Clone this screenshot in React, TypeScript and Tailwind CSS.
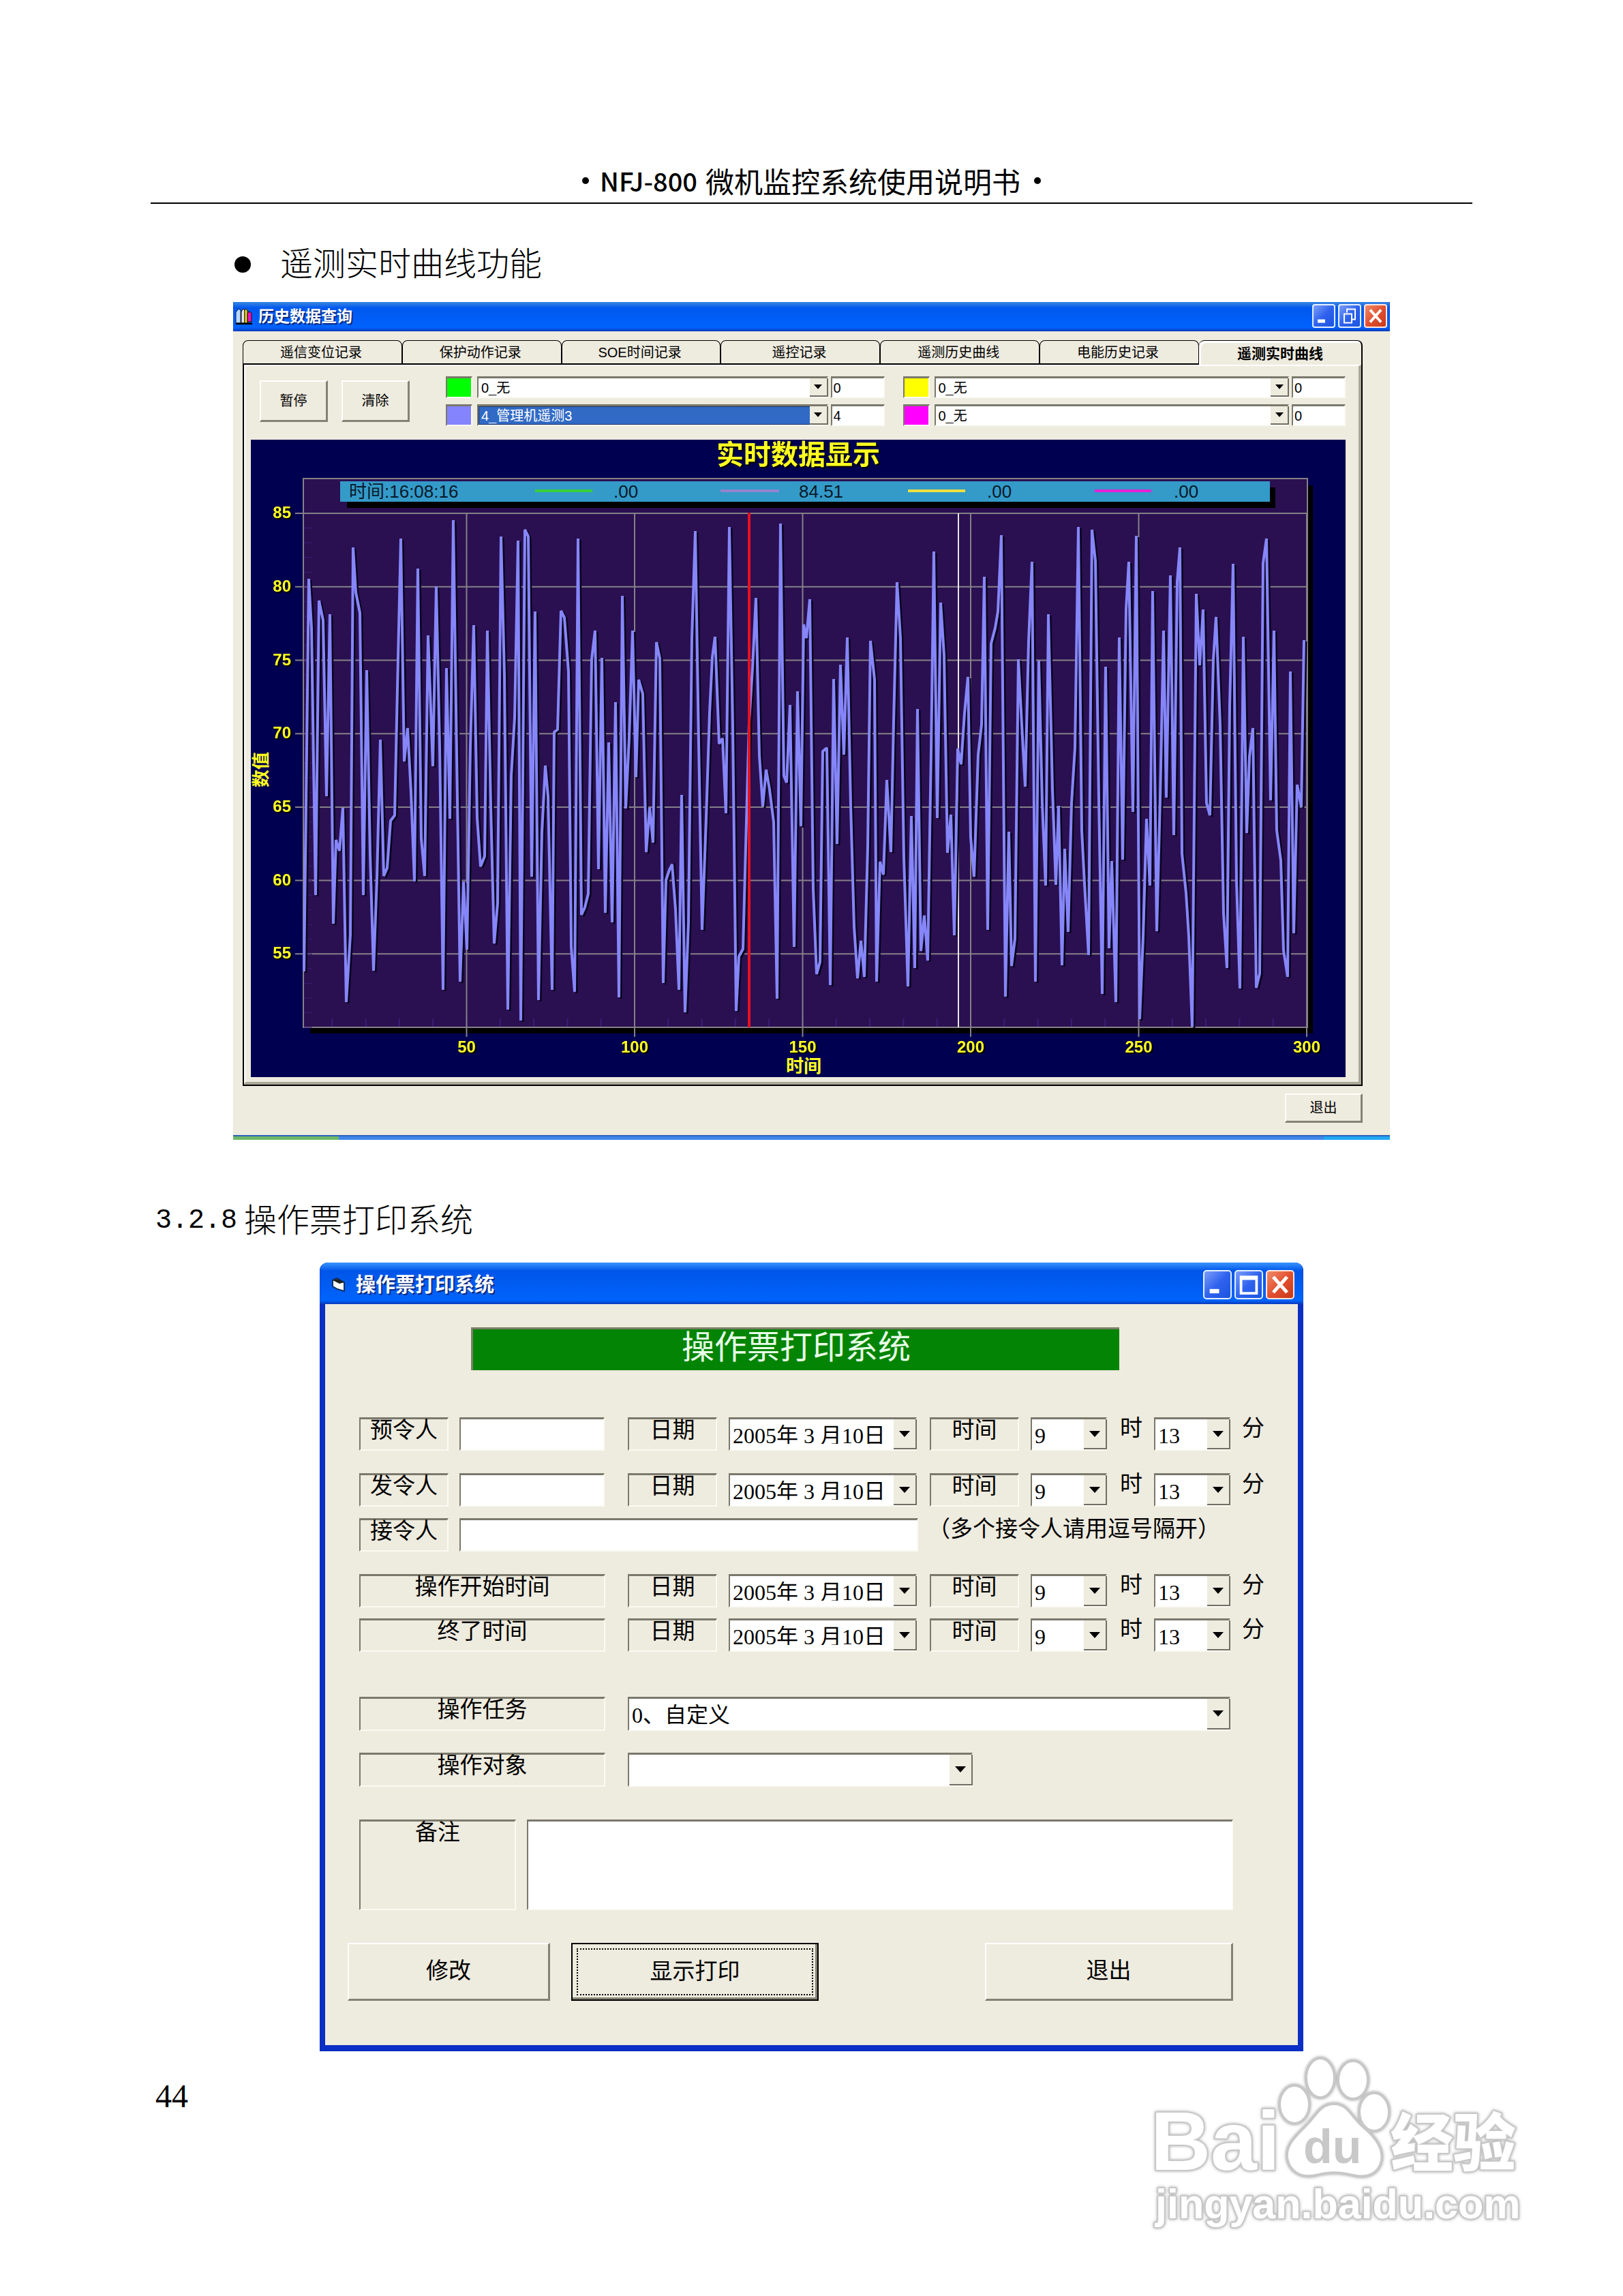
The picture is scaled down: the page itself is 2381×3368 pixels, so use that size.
import type { ReactNode } from "react";

const songFont = "font-['Liberation_Serif','Noto_Sans_CJK_SC',sans-serif]";
const heiFont = "font-['Noto_Sans_CJK_SC',sans-serif]";
const uiFont = "font-['Liberation_Sans','Noto_Sans_CJK_SC',sans-serif]";

const sunken = "border-t-[3px] border-l-2 border-r-2 border-b-2 border-t-[#7b786c] border-l-[#7b786c] border-r-[#fbfaf3] border-b-[#fbfaf3]";
const raised = "border-t-2 border-l-2 border-r-[3px] border-b-[3px] border-t-white border-l-white border-r-[#858275] border-b-[#858275]";

const tabs = ["遥信变位记录", "保护动作记录", "SOE时间记录", "遥控记录", "遥测历史曲线", "电能历史记录"];

const blocks = [
  {
    dx: -28, kx: 2.8, ky: 1.633,
    pts: "298,1298 317,357 328,475 345,1116 359,410 374,458 388,878 402,442 416,1184 428,983 443,1010 457,907 471,1372 486,1210 498,282 510,390 527,440 540,1116 554,576 567,1017 582,1297 596,1075 609,743 623,1070 637,1050 651,937 668,925 679,620 693,261 707,795 721,715 735,870 749,1082 764,333 778,980 793,1070 806,493 827,806 841,375 855,760 869,1342 883,571 897,932 911,217 925,780 939,1323 953,1082 967,1246 981,760 995,468 1008,930 1023,1047 1038,1022 1051,481 1065,905 1079,1231 1093,1135 1106,257 1120,590 1134,1389 1148,830 1162,690 1175,266 1188,1416 1203,240 1218,256 1231,1072 1245,436 1259,1367 1273,965 1287,805 1300,878 1315,1342 1324,725 1338,718 1351,435 1367,450 1382,580 1393,1240 1408,1347 1421,261 1435,1162 1450,1145 1465,1112 1478,550 1491,481 1506,1054",
  },
  {
    dx: 512, kx: 2.8, ky: 1.633,
    pts: "8,547 22,1158 36,750 50,1180 64,654 78,1360 92,398 106,908 119,740 133,481 147,833 160,600 177,634 190,1012 204,907 217,990 233,510 247,548 260,1326 272,1080 285,1055 298,1042 310,1150 326,1342 337,875 351,1396 365,1180 379,500 392,244 407,750 421,1198 436,930 450,680 462,545 474,497 489,753 503,740 517,919 531,233 545,715 560,1393 572,1262 587,1245 600,1000 613,700 628,570 642,403 656,780 670,903 684,815 698,862 714,940 727,1363 741,225 755,830 768,846 782,659 797,1240 811,627 825,950 838,467 848,500 861,406 875,1100 889,1304 904,1275 915,770 932,763 946,1331 960,597 973,993 988,563 1001,779 1015,498 1030,900 1044,1190 1057,1314 1071,1225 1085,1312 1100,1000 1112,506 1127,600 1138,1323 1152,1035 1166,1066 1180,839 1195,1012 1208,700 1222,365 1236,500 1250,1025 1265,1334 1279,926 1293,1290 1306,670 1320,1250 1334,1165 1348,1272 1362,770 1371,293 1385,930 1399,414 1413,540 1427,1014 1441,922 1455,1212 1469,765 1483,802 1497,680 1511,592",
  },
  {
    dx: 1052, kx: 2.45, ky: 1.479,
    pts: "11,885 23,970 36,705 48,640 60,320 72,1085 84,465 97,430 109,395 121,229 134,1230 146,872 158,1164 170,1105 182,498 194,640 207,775 218,460 230,287 242,1198 255,502 266,810 279,990 290,401 303,780 315,988 325,816 337,1162 349,910 361,1090 373,810 385,690 396,212 408,870 420,985 433,1141 445,218 457,285 470,800 482,1224 494,515 506,1125 518,936 531,1243 543,451 556,933 568,390 579,287 592,830 604,231 617,1280 630,1100 641,844 653,990 665,350 678,1088 690,800 702,437 714,799 727,317 739,880 751,330 763,256 770,920 783,1005 795,1100 807,1295 820,357 832,512 845,391 857,810 869,837 881,500 893,406 906,640 918,1050 930,1168 942,600 952,291 965,980 977,1213 989,450 1001,876 1013,710 1025,648 1037,1211 1049,1180 1061,290 1074,236 1087,804 1099,437 1110,870 1124,935 1135,1130 1148,1187 1160,525 1172,1093 1184,770 1197,820 1207,457",
  },
];

const curve = blocks
  .flatMap((b) =>
    b.pts.split(" ").map((p) => {
      const [x, y] = p.split(",").map(Number);
      return `${Math.round(x / b.kx + b.dx)},${Math.round(y / b.ky - 15)}`;
    })
  )
  .join(" ");

const px = (v: number) => 70 + v * 4.93;
const py = (v: number) => 862 - (v - 50) * 21.54;

function Chart() {
  return (
    <svg viewBox="0 0 1606 935" className={`block w-full bg-[#000050] ${uiFont}`} role="img" aria-label="实时数据显示">
      <text x="803" y="36" textAnchor="middle" fontSize="40" fontWeight="700" fill="#ffff20" className="drop-shadow-[2px_2px_0_#000]">
        实时数据显示
      </text>
      <rect x="87" y="67" width="1471" height="804" fill="#000" />
      <rect x="77" y="57" width="1473" height="805" fill="#2a1050" stroke="#858088" strokeWidth="2" />
      {[85, 80, 75, 70, 65, 60, 55].map((v) => (
        <g key={v}>
          <line x1="65" x2="1550" y1={py(v)} y2={py(v)} stroke="#858088" strokeWidth="2" />
          <text x="59" y={py(v) + 7} textAnchor="end" fontSize="24" fontWeight="700" fill="#ffff20" className="drop-shadow-[2px_2px_0_#000]">
            {v}
          </text>
        </g>
      ))}
      {Array.from({ length: 35 }, (_, i) => (
        <line key={i} x1="78" x2="90" y1={py(50 + i)} y2={py(50 + i)} stroke="#3c1c78" />
      ))}
      {Array.from({ length: 29 }, (_, i) => (
        <line key={i} x1={px(10 + i * 10)} x2={px(10 + i * 10)} y1="849" y2="861" stroke="#3c1c78" strokeWidth="2" />
      ))}
      {[50, 100, 150, 200, 250, 300].map((v) => (
        <g key={v}>
          <line x1={px(v)} x2={px(v)} y1="108" y2="876" stroke="#858088" strokeWidth="2" />
          <text x={px(v)} y="899" textAnchor="middle" fontSize="24" fontWeight="700" fill="#ffff20" className="drop-shadow-[2px_2px_0_#000]">
            {v}
          </text>
        </g>
      ))}
      <line x1="1038" x2="1038" y1="108" y2="862" stroke="#e8e8e8" strokeWidth="2" />
      <polyline points={curve} fill="none" stroke="#08041c" strokeWidth="3" transform="translate(3 2)" />
      <polyline points={curve} fill="none" stroke="#8686fa" strokeWidth="4" strokeLinejoin="bevel" />
      <rect x="729" y="107" width="4" height="755" fill="#e81020" />

      <rect x="141" y="70" width="1362" height="30" fill="#000" />
      <rect x="131" y="61" width="1364" height="30" fill="#349ac8" />
      <g fontSize="26" fill="#081828">
        <text x="144" y="85">时间:16:08:16</text>
        <text x="532" y="85">.00</text>
        <text x="804" y="85">84.51</text>
        <text x="1080" y="85">.00</text>
        <text x="1354" y="85">.00</text>
      </g>
      <g strokeWidth="4">
        <line x1="417" x2="501" y1="75" y2="75" stroke="#38d038" />
        <line x1="689" x2="775" y1="75" y2="75" stroke="#9484d0" />
        <line x1="964" x2="1048" y1="75" y2="75" stroke="#f0e040" />
        <line x1="1238" x2="1321" y1="75" y2="75" stroke="#e820d8" />
      </g>
      <text x="811" y="928" textAnchor="middle" fontSize="26" fontWeight="700" fill="#ffff20">时间</text>
      <text transform="translate(24 484) rotate(-90)" textAnchor="middle" fontSize="26" fontWeight="700" fill="#ffff20">数值</text>
    </svg>
  );
}

function Caption({ small, middle }: { small?: boolean; middle: ReactNode }) {
  const box = small ? "h-[35px] w-[34px] rounded-[4px]" : "h-[43px] w-[42px] rounded-[5px]";
  const blue = "bg-linear-to-br from-[#7d9cf8] via-[#2f62ee] to-[#1a55e0]";
  return (
    <div className="flex gap-1">
      <button aria-label="最小化" className={`border-2 border-[#e4f0ff] ${box} ${blue}`}>
        <svg viewBox="0 0 30 30" className="size-full"><rect x="6" y="20" width="11" height="5" fill="#fff" /></svg>
      </button>
      <button aria-label="最大化" className={`border-2 border-[#e4f0ff] ${box} ${blue}`}>
        <svg viewBox="0 0 30 30" className="size-full" fill="none" stroke="#fff" strokeWidth="2">{middle}</svg>
      </button>
      <button aria-label="关闭" className={`border-2 border-[#ffe8e0] bg-linear-to-br from-[#f08a68] via-[#e25030] to-[#c83818] ${box}`}>
        <svg viewBox="0 0 30 30" className="size-full"><path d="M7 6 L23 24 M23 6 L7 24" stroke="#fff" strokeWidth="4" /></svg>
      </button>
    </div>
  );
}

function Select({ label, value, className, small, selected }: { label: string; value: string; className: string; small?: boolean; selected?: boolean }) {
  return (
    <div className={`relative bg-white ${sunken} ${className}`}>
      <select
        aria-label={label}
        className={`block h-full w-full appearance-none pl-1 ${small ? "leading-[22px]" : "pb-2"} ${selected ? "bg-[#316ac5] text-white outline-1 -outline-offset-1 outline-dotted outline-black" : ""}`}
      >
        <option>{value}</option>
      </select>
      <span className={`pointer-events-none absolute inset-y-0 -right-[2px] flex items-center justify-center border-r-2 border-b-2 border-[#716f64] bg-[#eeebdf] ${small ? "w-[27px]" : "w-[34px]"}`}>
        <svg viewBox="0 0 16 9" className={small ? "w-3" : "w-4"}><path d="M0 0 H16 L8 9 Z" /></svg>
      </span>
    </div>
  );
}

function Channel({ color, value, num, selected }: { color: string; value: string; num: string; selected?: boolean }) {
  return (
    <div className="flex h-8">
      <span className={`mr-[7px] w-[39px] ${sunken} ${color}`} />
      <Select small label="通道" value={value} selected={selected} className="mr-1 min-w-0 flex-1" />
      <input aria-label="通道号" defaultValue={num} className={`w-[79px] bg-white pl-[2px] ${sunken}`} />
    </div>
  );
}

function HistoryWindow() {
  return (
    <section className={`bg-[#eeebdf] text-[20px] ${uiFont}`}>
      <div className="flex h-[43px] items-center bg-linear-to-b from-[#3a86e0] via-[#0058ee] via-20% to-[#0064ff] pr-1 pb-[2px] pl-[3px] shadow-[inset_0_-3px_3px_#0a3fc0]">
        <svg viewBox="0 0 26 24" className="h-6 w-[26px]">
          <path d="M1 22 V6 L5 1 L8 3 V22 Z" fill="#b8d8ff" stroke="#102040" />
          <path d="M9 22 V5 L12 1 L14 3 V22 Z" fill="#e8e8e8" stroke="#201000" />
          <path d="M14 22 V3 L16 1 L18 4 V22 Z" fill="#e8e020" stroke="#201000" />
          <path d="M18 20 V8 L20 5 L24 7 V20 Z" fill="#f010c0" stroke="#201000" />
          <path d="M1 23 H25" stroke="#000" strokeWidth="3" />
        </svg>
        <h3 className="ml-2 flex-1 text-[23px] leading-[30px] font-bold text-white [text-shadow:2px_2px_0_#0a2a80]">历史数据查询</h3>
        <Caption small middle={<path d="M11 10 V5 H23 V20 H19 M7 12 H18 V25 H7 Z" />} />
      </div>
      <div className="pt-[13px] pr-10 pl-[14px]">
        <div className="flex h-9">
          {tabs.map((t) => (
            <button key={t} className="flex-1 rounded-t-[8px] border-x border-t border-b-2 border-black pr-1">
              {t}
            </button>
          ))}
          <button className="w-[240px] rounded-t-[8px] border-t border-r-2 border-black pt-[2px] text-[21px] font-bold shadow-[inset_3px_3px_0_#fff]">遥测实时曲线</button>
        </div>
        <div className="border-r-2 border-b-2 border-l-2 border-black">
          <div className="border-t-2 border-r-4 border-b-4 border-l-2 border-t-white border-r-[#aca899] border-b-[#aca899] border-l-white pt-[15px] pr-[19px] pb-[7px] pl-2">
            <div className="mb-5 flex items-center pl-[13px]">
              <button className={`mr-5 h-[61px] w-[100px] ${raised}`}>暂停</button>
              <button className={`mr-[53px] h-[61px] w-[100px] ${raised}`}>清除</button>
              <div className="grid flex-1 grid-cols-[644fr_650fr] gap-x-[27px] gap-y-[9px]">
                <Channel color="bg-[#00ff00]" value="0_无" num="0" />
                <Channel color="bg-[#ffff00]" value="0_无" num="0" />
                <Channel color="bg-[#8484ff]" value="4_管理机遥测3" num="4" selected />
                <Channel color="bg-[#ff00ff]" value="0_无" num="0" />
              </div>
            </div>
            <Chart />
          </div>
        </div>
        <div className="mt-[11px] mb-[18px] flex justify-end">
          <button className={`h-[43px] w-[114px] ${raised}`}>退出</button>
        </div>
      </div>
      <div className="flex h-[7px] border-t-2 border-[#2c62b8] bg-[#3f86ec]">
        <span className="w-[155px] bg-[#6cb868]" />
        <span className="ml-auto w-[97px] bg-[#20a8f4]" />
      </div>
    </section>
  );
}

function Tag({ children, className }: { children: string; className: string }) {
  return <span className={`block shrink-0 text-center leading-[33px] ${sunken} ${className}`}>{children}</span>;
}

function TimeFields() {
  return (
    <>
      <Tag className="mr-[17px] w-[131px]">日期</Tag>
      <Select label="日期" value="2005年 3 月10日" className="mr-[19px] min-w-0 flex-1 text-[32px]" />
      <Tag className="mr-[17px] w-[131px]">时间</Tag>
      <Select label="时" value="9" className="mr-[19px] w-[112px] text-[32px]" />
      <span className="mr-[17px] leading-[33px]">时</span>
      <Select label="分" value="13" className="mr-[17px] w-[112px] text-[32px]" />
      <span className="leading-[33px]">分</span>
    </>
  );
}

function TicketWindow() {
  return (
    <section className={`rounded-t-[12px] bg-[#0a2fc4] pb-[9px] text-[33px] ${songFont}`}>
      <div className="flex h-[61px] items-center rounded-t-[12px] bg-linear-to-b from-[#3a94ff] via-[#0055e8] via-20% to-[#0066ff] pt-1 pr-[13px] pl-[17px] shadow-[inset_0_-3px_3px_#0a3fc0]">
        <svg viewBox="0 0 22 22" className="size-[22px]">
          <path d="M2 4 L8 1 L19 7 V20 L9 17 L2 13 Z" fill="#fff" stroke="#103060" strokeWidth="2" />
          <path d="M2 4 L9 2 L19 7 L12 9 Z" fill="#202020" />
        </svg>
        <h3 className="ml-[14px] flex-1 text-[29px] leading-[36px] font-bold text-white [text-shadow:2px_2px_0_#0a2a80]">操作票打印系统</h3>
        <Caption middle={<path d="M6 6 H24 V25 H6 Z M6 8 H24" strokeWidth="3" />} />
      </div>
      <form className="mx-2 bg-[#eeebdf] pt-[34px] pb-[65px]">
        <h4 className="mr-[262px] ml-[214px] h-[63px] border-t-[3px] border-l-[3px] border-[#7b8068] bg-[#048404] text-center text-[48px] leading-[54px] text-[#e8ffe8]">操作票打印系统</h4>
        <div className="mt-[69px] mr-[49px] ml-[50px]">
          <div className="mb-[33px] flex h-[49px]">
            <Tag className="mr-4 w-[131px]">预令人</Tag>
            <input aria-label="预令人" className={`mr-[34px] w-[213px] bg-white ${sunken}`} />
            <TimeFields />
          </div>
          <div className="mb-[17px] flex h-[49px]">
            <Tag className="mr-4 w-[131px]">发令人</Tag>
            <input aria-label="发令人" className={`mr-[34px] w-[213px] bg-white ${sunken}`} />
            <TimeFields />
          </div>
          <div className="mb-[33px] flex h-[49px]">
            <Tag className="mr-4 w-[131px]">接令人</Tag>
            <input aria-label="接令人" className={`mr-[14px] min-w-0 flex-1 bg-white ${sunken}`} />
            <span className="mr-[65px] leading-[33px]">（多个接令人请用逗号隔开）</span>
          </div>
          <div className="mb-4 flex h-[49px]">
            <Tag className="mr-[33px] w-[361px]">操作开始时间</Tag>
            <TimeFields />
          </div>
          <div className="mb-[66px] flex h-[49px]">
            <Tag className="mr-[33px] w-[361px]">终了时间</Tag>
            <TimeFields />
          </div>
          <div className="mb-8 flex h-[50px]">
            <Tag className="mr-[33px] w-[361px]">操作任务</Tag>
            <Select label="操作任务" value="0、自定义" className="mr-[50px] flex-1 text-[32px]" />
          </div>
          <div className="mb-12 flex h-[50px]">
            <Tag className="mr-[33px] w-[361px]">操作对象</Tag>
            <Select label="操作对象" value="" className="w-[506px] text-[32px]" />
          </div>
          <div className="flex h-[133px]">
            <Tag className="mr-4 w-[230px]">备注</Tag>
            <textarea aria-label="备注" className={`mr-[46px] flex-1 resize-none bg-white ${sunken}`} />
          </div>
        </div>
        <div className="mt-12 mr-[95px] ml-[33px] flex h-[85px]">
          <button type="button" className={`mr-[31px] w-[297px] ${raised}`}>修改</button>
          <button type="button" className="w-[363px] border-2 border-black p-[6px] shadow-[inset_-3px_-3px_0_#858275]">
            <span className="flex h-full items-center justify-center border-2 border-dotted border-black">显示打印</span>
          </button>
          <button type="button" className={`ml-auto w-[364px] ${raised}`}>退出</button>
        </div>
      </form>
    </section>
  );
}

function Watermark() {
  return (
    <svg viewBox="0 0 570 270" className={`h-[270px] w-[570px] drop-shadow-[0_0_2px_#aaa] ${uiFont}`} role="img" aria-label="Baidu 经验">
      <g fill="#fff" stroke="#c8c8c8" strokeWidth="4" strokeLinejoin="round">
        <text x="8" y="170" fontSize="122" fontWeight="700" paintOrder="stroke">Bai</text>
        <ellipse cx="219" cy="74" rx="22" ry="28" />
        <ellipse cx="257" cy="35" rx="21" ry="29" />
        <ellipse cx="305" cy="38" rx="22" ry="28" />
        <ellipse cx="336" cy="85" rx="22" ry="28" />
        <path d="M277 73 C298 73 302 92 320 107 C338 122 350 138 347 156 C343 176 326 183 305 178 C285 173 270 173 250 178 C228 183 211 172 208 152 C206 134 220 121 234 107 C250 92 256 73 277 73 Z" />
        <text x="360" y="164" fontSize="92" fontWeight="900" paintOrder="stroke">经验</text>
        <text x="15" y="241" fontSize="61" fontWeight="700" paintOrder="stroke">jingyan.baidu.com</text>
      </g>
      <text x="232" y="160" fontSize="70" fontWeight="700" fill="#c8c8c8">du</text>
    </svg>
  );
}

export default function App() {
  return (
    <main className="bg-white px-[221px] pt-[240px] pb-[88px] text-black">
      <header className={`flex items-center justify-center border-b-2 border-black pb-[7px] text-[42px] leading-[50px] ${heiFont}`}>
        <span className="mr-4 size-[10px] rounded-full bg-black" />
        <span className="mr-3 text-[38px] font-medium">NFJ-800</span>
        <span>微机监控系统使用说明书</span>
        <span className="ml-5 size-[10px] rounded-full bg-black" />
      </header>

      <h2 className={`mt-[57px] ml-[123px] flex items-center text-[48px] leading-[64px] font-light ${songFont}`}>
        <span className="mr-[43px] size-6 rounded-full bg-black" />
        遥测实时曲线功能
      </h2>
      <div className="mx-[121px] mt-[23px]">
        <HistoryWindow />
      </div>

      <h2 className={`mt-[87px] ml-[7px] flex text-[48px] leading-[64px] font-light ${songFont}`}>
        <span className="w-[130px] font-['Liberation_Mono',monospace] text-[40px]">3.2.8</span>
        操作票打印系统
      </h2>
      <div className="mx-[248px] mt-[29px]">
        <TicketWindow />
      </div>

      <footer className={`flex items-start justify-between pl-[7px] ${songFont}`}>
        <span className="mt-[34px] text-[48px] leading-[64px]">44</span>
        <div className="-mr-[90px] pt-1">
          <Watermark />
        </div>
      </footer>
    </main>
  );
}
